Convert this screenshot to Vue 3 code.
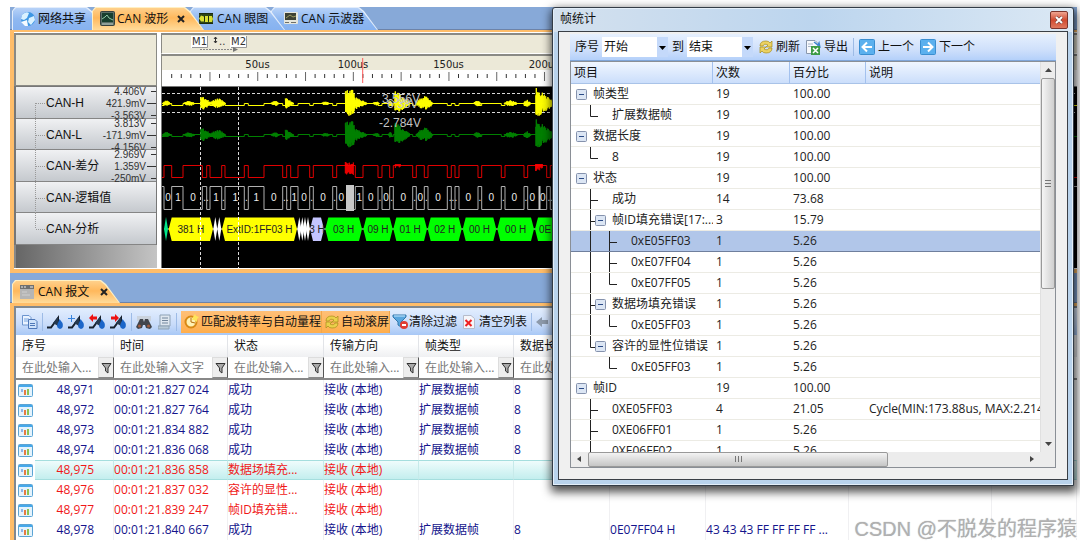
<script setup>
const channels = [
  { name: 'CAN-H', values: ['4.406V', '421.9mV', '-3.563V'] },
  { name: 'CAN-L', values: ['3.813V', '-171.9mV', '-4.156V'] },
  { name: 'CAN-差分', values: ['2.969V', '1.359V', '-250mV'] },
  { name: 'CAN-逻辑值', values: [] },
  { name: 'CAN-分析', values: [] },
]

/* Samples are stored at three units per pixel */
const px = (v) => Math.round((v / 3 - 4) * 10) / 10

const ticks = Array.from({ length: 96 }, (_, i) => ({ x: 9.7 + i * 9.56, major: i % 5 === 4 }))
const rulerLabels = Array.from({ length: 9 }, (_, i) => ({ x: 95.5 + i * 95.5, text: (i + 1) * 50 + 'us' }))

/* Bus edges: the level toggles at each one, starting recessive */
const edges = [
  18, 41, 75, 133, 146, 156, 191, 201, 259, 271, 318, 374, 386, 398, 420, 455, 466, 524, 536, 592,
  615, 660, 672, 695, 706, 764, 775, 799, 810, 868, 880, 891, 903, 960, 971, 1030, 1041, 1098, 1109,
  1166, 1177, 1235, 1247, 1304, 1316, 1400, 1412, 1500, 1540, 1620, 1632, 1700, 1712, 1800, 1812,
  1900, 1912, 2000, 2012, 2100, 2112, 2200, 2212, 2300, 2312, 2400, 2412, 2500, 2512, 2600, 2612, 2700,
]

function square(recessive, dominant) {
  let d = `M0 ${recessive}`
  edges.forEach((e, i) => {
    d += `H${px(e)}V${i % 2 === 0 ? dominant : recessive}`
  })
  return d + 'H920'
}

/* start, width, amplitude, shape */
const bursts = [
  [12, 26, 8, 'flat'], [76, 34, 8, 'flat'], [128, 30, 27, 'fade'], [156, 46, 14, 'flat'], [338, 26, 7, 'flat'],
  [382, 24, 17, 'fade'], [490, 24, 6, 'flat'], [562, 27, 42, 'full'], [587, 38, 22, 'fade'], [644, 20, 6, 'flat'],
  [690, 12, 8, 'flat'], [710, 44, 38, 'fade'], [774, 50, 20, 'flat'], [946, 24, 8, 'flat'], [1038, 40, 9, 'flat'],
  [1096, 22, 10, 'flat'], [1133, 54, 46, 'fade'],
]

function noise(i) {
  const s = Math.sin(i * 12.9898) * 43758.5453
  return s - Math.floor(s)
}

function burstPath(center) {
  let d = ''
  bursts.forEach(([x, w, a, shape], b) => {
    for (let i = 0; i <= w; i += 2) {
      const t = i / w
      const k = shape === 'full' ? 1 : shape === 'fade' ? 1.05 - t * 0.9 : Math.sin(Math.PI * t) + 0.1
      const up = (a / 3) * k * (0.5 + 0.5 * noise(b * 50 + i))
      const down = (a / 3) * k * (0.4 + 0.5 * noise(b * 91 + i + 7))
      d += `${i ? 'L' : 'M'}${px(x + i)} ${(center - up).toFixed(1)}L${px(x + i + 1)} ${(center + down).toFixed(1)}`
    }
  })
  return d
}

const canH = square(18.5, 16.5) + burstPath(16.5)
const canL = square(49.5, 47.5) + burstPath(48)
const diff = square(90.5, 78.5)
const logic = square(99.5, 122.5)

let diffNoise = ''
for (let i = 0; i < 26; i += 2) diffNoise += `M${px(562 + i)} ${75 + noise(i) * 3}V${88 - noise(i + 3) * 3}`
for (let i = 0; i < 22; i += 2) diffNoise += `M${px(1133 + i)} 77V${84 - noise(i) * 4}`
for (let i = 0; i < 16; i += 3) diffNoise += `M${px(712 + i)} 77V${81 - noise(i) * 3}`

const bits = [
  [30, '0'], [60, '1'], [105, '0'], [144, '..'], [174, '1'], [196, '.'], [232, '1'], [265, '.'], [295, '1'],
  [347, '0'], [383, '..'], [409, '1'], [438, '0'], [461, '.'], [495, '0'], [530, '.'], [550, '0'], [604, '1'],
  [638, '0'], [666, '.'], [684, '0'], [701, '.'], [736, '0'], [770, '.'], [787, '0'], [805, '.'], [840, '0'],
  [885, '...'], [931, '0'], [966, '.'], [1000, '0'], [1036, '.'], [1069, '0'], [1104, '.'], [1123, '0'], [1154, '0'], [1177, '..'],
]

const fields = [
  { a: 32, b: 165, text: '381 H', color: '#ffff00' },
  { a: 192, b: 417, text: 'ExtID:1FF03 H', color: '#ffff00' },
  { a: 456, b: 498, text: '3 H', color: '#c4c4ff' },
  { a: 502, b: 612, text: '03 H', color: '#00ff00' },
  { a: 616, b: 704, text: '09 H', color: '#00ff00' },
  { a: 706, b: 807, text: '01 H', color: '#00ff00' },
  { a: 809, b: 911, text: '02 H', color: '#00ff00' },
  { a: 914, b: 1015, text: '00 H', color: '#00ff00' },
  { a: 1018, b: 1128, text: '00 H', color: '#00ff00' },
  { a: 1131, b: 1222, text: '0E H', color: '#00ff00' },
].map((f) => {
  const a = px(f.a)
  const b = px(f.b)
  return { ...f, mid: (a + b) / 2, points: `${a},142 ${a + 3},130.5 ${b - 3},130.5 ${b},142 ${b - 3},154 ${a + 3},154` }
})
const spikes = [172, 184, 424, 433, 441, 450]

const headers = [
  { label: '时间', hint: '在此处输入文字' },
  { label: '状态', hint: '在此处输入...' },
  { label: '传输方向', hint: '在此处输入...' },
  { label: '帧类型', hint: '在此处输入...' },
  { label: '数据长度', hint: '在此处输入...' },
]
const ok = (no, time, id = '', data = '') => ({ no, time, state: '成功', type: '扩展数据帧', len: '8', id, data })
const bad = (no, time, state) => ({ no, time, state, error: true })
const messages = [
  ok('48,971', '00:01:21.827 024'),
  ok('48,972', '00:01:21.827 764'),
  ok('48,973', '00:01:21.834 882'),
  ok('48,974', '00:01:21.836 068'),
  { ...bad('48,975', '00:01:21.836 858', '数据场填充...'), selected: true },
  bad('48,976', '00:01:21.837 032', '容许的显性...'),
  bad('48,977', '00:01:21.839 247', '帧ID填充错...'),
  ok('48,978', '00:01:21.840 667', '0E07FF04 H', '43 43 43 FF FF FF FF ...'),
]

/* g: guide lines drawn left of the label */
const M0 = 'M19.5 0V21'
const stats = [
  { lv: 0, box: 1, t: '帧类型', n: 19, p: '100.00' },
  { lv: 1, t: '扩展数据帧', n: 19, p: '100.00', g: 'M19.5 0V11.5H27' },
  { lv: 0, box: 1, t: '数据长度', n: 19, p: '100.00' },
  { lv: 1, t: '8', n: 19, p: '100.00', g: 'M19.5 0V11.5H27' },
  { lv: 0, box: 1, t: '状态', n: 19, p: '100.00' },
  { lv: 1, t: '成功', n: 14, p: '73.68', g: M0 + 'M19.5 11.5H27' },
  { lv: 1, box: 1, t: '帧ID填充错误[17:...', n: 3, p: '15.79', g: M0 + 'M19.5 11.5H24' },
  { lv: 2, t: '0xE05FF03', n: 1, p: '5.26', g: M0 + 'M38.5 0V21M38.5 11.5H46', selected: true },
  { lv: 2, t: '0xE07FF04', n: 1, p: '5.26', g: M0 + 'M38.5 0V21M38.5 11.5H46' },
  { lv: 2, t: '0xE07FF05', n: 1, p: '5.26', g: M0 + 'M38.5 0V11.5H46' },
  { lv: 1, box: 1, t: '数据场填充错误', n: 1, p: '5.26', g: M0 + 'M19.5 11.5H24' },
  { lv: 2, t: '0xE05FF03', n: 1, p: '5.26', g: M0 + 'M38.5 0V11.5H46' },
  { lv: 1, box: 1, t: '容许的显性位错误', n: 1, p: '5.26', g: 'M19.5 0V11.5H24' },
  { lv: 2, t: '0xE05FF03', n: 1, p: '5.26', g: 'M38.5 0V11.5H46' },
  { lv: 0, box: 1, t: '帧ID', n: 19, p: '100.00' },
  { lv: 1, t: '0XE05FF03', n: 4, p: '21.05', g: M0 + 'M19.5 11.5H27', d: 'Cycle(MIN:173.88us, MAX:2.214ms)' },
  { lv: 1, t: '0XE06FF01', n: 1, p: '5.26', g: M0 + 'M19.5 11.5H27' },
  { lv: 1, t: '0XE06FF02', n: 1, p: '5.26', g: M0 + 'M19.5 11.5H27' },
]
</script>

<template>
  <div class="page">
    <main class="app">
      <nav class="tabs">
        <button class="tab t1">
          <svg width="16" height="16" viewBox="0 0 16 16">
            <circle cx="8" cy="8" r="7" fill="#3d97e4" />
            <path d="M2 4Q6 0 9 2L7 7 4 9 1 8ZM9 7l5-2 1 4-4 5-3-3Z" fill="#d9f1ff" />
            <path d="M1 11l6-2 1 6-3 0Z" fill="#f6fbff" />
          </svg>
          网络共享
        </button>
        <button class="tab t2 active">
          <svg width="15" height="15" viewBox="0 0 15 15">
            <rect x=".5" y=".5" width="14" height="14" rx="1" fill="#5b7068" stroke="#37413d" />
            <rect x="2" y="2" width="11" height="9" fill="#173f2e" />
            <path d="M2 8l3-2 2-2 2 3 4 2" fill="none" stroke="#8fc9a5" />
            <path d="M2 13h11" stroke="#c5d0c9" />
          </svg>
          CAN 波形
          <svg class="x" width="8" height="8" viewBox="0 0 8 8"><path d="M1 1l6 6M7 1L1 7" stroke="#222" stroke-width="2" /></svg>
        </button>
        <button class="tab t3">
          <svg width="14" height="11" viewBox="0 0 14 11">
            <rect width="14" height="11" fill="#1b2b12" />
            <path d="M0 2h14M0 9h14" stroke="#41601c" />
            <path d="M0 5.5l2-3 3 1v5l-3 0ZM6 3h3v6H6ZM10 3l3 0 1 3-1 3h-3Z" fill="#d8e034" />
          </svg>
          CAN 眼图
        </button>
        <button class="tab t4">
          <svg width="14" height="13" viewBox="0 0 14 13">
            <rect width="14" height="12" rx="1" fill="#e6e6dc" />
            <rect x="1" y="1" width="11" height="7" fill="#3e4234" />
            <path d="M2 6l4-3 3 2 3-1" stroke="#9d9c62" fill="none" />
            <path d="M1 10.500h4M7 10.500h5" stroke="#6f6f68" />
          </svg>
          CAN 示波器
        </button>
      </nav>

      <section class="scope">
        <div class="side">
          <div class="corner"></div>
          <div class="channels">
            <div v-for="(c, i) in channels" :key="c.name" class="channel">
              <svg class="branch" width="30" height="32" viewBox="0 0 30 32">
                <path :d="(i === 0 ? 'M19.500 16V32' : i === 4 ? 'M19.500 0V16' : 'M19.500 0V32') + 'M20 16.500H29'" fill="none" stroke="#999" stroke-dasharray="1 1" />
              </svg>
              <span class="cname">{{ c.name }}</span>
              <span class="vals"><span v-for="v in c.values" :key="v">{{ v }}</span></span>
              <svg class="marks" width="10" height="32" viewBox="0 0 10 32">
                <path v-if="c.values.length" d="M5 4.500H10M1 16.500H10M5 28.500H10" stroke="#333" />
              </svg>
            </div>
          </div>
          <div class="shade"></div>
        </div>
        <div class="plot">
          <div class="marker-bar">
            <svg width="916" height="19" viewBox="0 0 916 19">
              <rect x="29" y="1" width="16" height="12" fill="#fff" />
              <rect x="68" y="1" width="16" height="12" fill="#fff" />
              <path d="M30 12.500H45.500V1M69 12.500H84.500V1" fill="none" stroke="#999" />
              <text x="30" y="10" class="mk">M1</text>
              <text x="69" y="10" class="mk">M2</text>
              <path d="M53.500 2V8M52 4l1.500-2 1.500 2M52 6l1.500 2 1.500-2" fill="none" stroke="#333" />
              <text x="57" y="10" class="mk">..</text>
              <path d="M38 14.500H73" stroke="#888" stroke-dasharray="2 1" />
              <path d="M71 12l5 2.500-5 2.500Z" fill="#777" />
            </svg>
          </div>
          <div class="ruler">
            <svg width="916" height="30" viewBox="0 0 916 30">
              <rect y="14" width="916" height="16" fill="#fff" />
              <text v-for="l in rulerLabels" :key="l.text" :x="l.x" y="12" class="rl">{{ l.text }}</text>
              <path v-for="(t, i) in ticks" :key="i" :d="t.major ? `M${t.x} 16V25` : `M${t.x} 18V22`" :stroke="t.major ? '#666' : '#333'" />
              <path d="M200.700 2V27" stroke="#ff5a5a" />
            </svg>
          </div>
          <div class="wave">
            <svg width="916" height="181" viewBox="0 0 916 181">
              <g stroke="#d8d8d8" stroke-dasharray="3 2">
                <path d="M0 6.500H916M0 25.500H916M38.500 0V181M76.500 0V181" />
              </g>
              <path :d="canH" fill="none" stroke="#ffff00" />
              <path :d="canL" fill="none" stroke="#008000" />
              <path :d="diff" fill="none" stroke="#e00000" />
              <path :d="diffNoise" stroke="#ff0000" />
              <path :d="logic" fill="none" stroke="#b0b0b0" />
              <rect x="184" y="98" width="8" height="26" fill="#c8c8c8" />
              <path d="M377.500 99V123" stroke="#c8c8c8" stroke-width="2" />
              <text v-for="b in bits" :key="b[0]" :x="px(b[0])" y="114" class="bit">{{ b[1] }}</text>
              <path d="M2 142H430" stroke="#ddd" />
              <path d="M4 130l2 12-2 12-2-12Z" fill="#00e58a" />
              <path v-for="s in spikes" :key="s" :d="`M${px(s)} 130l2 12-2 12-2-12Z`" fill="#fff" />
              <g v-for="f in fields" :key="f.a">
                <polygon :points="f.points" :fill="f.color" />
                <text :x="f.mid" y="146" class="field">{{ f.text }}</text>
              </g>
              <path d="M38.500 130V155M76.500 130V155" stroke="#fff" stroke-dasharray="3 2" />
              <g class="readout">
                <text x="220" y="16">3.556V</text>
                <text x="225" y="21">6.38V</text>
                <text x="217" y="40">-2.784V</text>
              </g>
            </svg>
          </div>
        </div>
      </section>

      <nav class="tabs low">
        <button class="tab t5 active">
          <svg width="14" height="14" viewBox="0 0 14 14">
            <rect width="14" height="14" fill="#b5b5b5" />
            <rect width="14" height="4" fill="#707070" />
            <path d="M1 2h2M4 2h2M10 2h3" stroke="#eee" />
            <path d="M2 7h5M2 10h8" stroke="#cfcfcf" />
          </svg>
          CAN 报文
          <svg class="x" width="8" height="8" viewBox="0 0 8 8"><path d="M1 1l6 6M7 1L1 7" stroke="#222" stroke-width="2" /></svg>
        </button>
      </nav>

      <section class="messages">
        <div class="toolbar">
          <button aria-label="复制">
            <svg width="16" height="14" viewBox="0 0 16 14">
              <path d="M.5.500H7l2 2V10H.500Z" fill="#eaf3ff" stroke="#6c95cf" /><path d="M2 4h5M2 6h5" stroke="#79a4de" />
              <path d="M6.500 4.500H13l2 2v7H6.500Z" fill="#cfe2fa" stroke="#4f78b8" /><path d="M8 8.500h5M8 10.500h5" stroke="#4f78b8" />
            </svg>
          </button>
          <i class="sep"></i>
          <button v-for="k in 4" :key="k" class="mark" :aria-label="'标记 ' + k">
            <svg width="17" height="16" viewBox="0 0 17 16">
              <path d="M0 13.500h4L11 4v8" fill="none" stroke="#17202c" stroke-width="2" />
              <path d="M6 9l5-6v9Z" fill="#26394f" />
              <path d="M12.500 5l3 4q1.500 5-2.500 6-4-1-2.500-5Z" fill="#1c66c9" />
              <path v-if="k === 2" d="M0 4.500h7M3.500 1v7" stroke="#3884dd" />
              <path v-if="k === 3" d="M0 4l4-4v2.500h4v3H4v2.500Z" fill="#ee1111" />
              <path v-if="k === 4" d="M9 4L5 0v2.500H1v3h4v2.500Z" fill="#ee1111" />
            </svg>
          </button>
          <i class="sep"></i>
          <button aria-label="查找">
            <svg width="16" height="14" viewBox="0 0 16 14">
              <path d="M1 1h14v5H1Z" fill="#cbd3dd" />
              <path d="M4 4h3l1 3 1-3h3l4 8-2 2-4-1-1-3H7l-1 3-4 1-2-2Z" fill="#42454c" />
              <circle cx="3.500" cy="11" r="1.500" fill="#a45c3e" /><circle cx="12.500" cy="11" r="1.500" fill="#a45c3e" />
            </svg>
          </button>
          <button class="doc" aria-label="详情">
            <svg width="14" height="16" viewBox="0 0 14 16">
              <path d="M2 1h10v11H2Z" fill="#dfe7ef" stroke="#8ea2b5" /><path d="M4 4h6M4 6.500h6M4 9h6" stroke="#71859b" />
              <path d="M0 12h11v3H0Z" fill="#b6c8d6" stroke="#8ea2b5" />
            </svg>
          </button>
          <i class="sep"></i>
          <button class="hot">
            <svg width="15" height="15" viewBox="0 0 15 15">
              <circle cx="7" cy="8" r="5.500" fill="#fff2b4" stroke="#d88915" stroke-width="2" />
              <path d="M7 4v4l4 1" fill="none" stroke="#b56a0a" /><path d="M11 0l1 2 3 1-2 2 0 3-3-2-2 0 1-3Z" fill="#ffe65a" />
            </svg>
            匹配波特率与自动量程
          </button>
          <button class="hot">
            <svg width="14" height="14" viewBox="0 0 14 14">
              <path d="M1 6Q1 1 7 1q3 0 4 2l2-2v6H7l2-2Q5 3 4 6Z" fill="#ead14a" stroke="#a88c1b" stroke-width=".7" />
              <path d="M13 8q0 5-6 5-3 0-4-2l-2 2V7h6L5 9q4 2 5-1Z" fill="#ead14a" stroke="#a88c1b" stroke-width=".7" />
            </svg>
            自动滚屏
          </button>
          <button class="plain">
            <svg width="16" height="15" viewBox="0 0 16 15">
              <path d="M1 1h13v2L9 8v5l-3-2V8L1 3Z" fill="#59a6de" stroke="#3478ac" /><path d="M2 2h11" stroke="#c7e8ff" />
              <circle cx="12" cy="11" r="4" fill="#e03d34" /><path d="M10 11h4" stroke="#fff" stroke-width="2" />
            </svg>
            清除过滤
          </button>
          <button class="plain gap">
            <svg width="12" height="14" viewBox="0 0 12 14">
              <path d="M.5.500H8l3.500 3V13.500H.500Z" fill="#f6f6fa" stroke="#b6bccb" /><path d="M2.500 5l6 6M8.500 5l-6 6" stroke="#ef2020" stroke-width="2" />
            </svg>
            清空列表
          </button>
          <i class="sep"></i>
          <button aria-label="声音">
            <svg width="16" height="12" viewBox="0 0 16 12"><path d="M0 6l6-5v3h6v4H6v3Z" fill="#8d9aab" /></svg>
          </button>
        </div>

        <table class="grid">
          <colgroup>
            <col class="c-ic"><col class="c-no"><col class="c-time"><col class="c-96"><col class="c-95"><col class="c-95">
            <col class="c-96"><col class="c-96"><col class="c-143"><col class="c-143"><col>
          </colgroup>
          <thead>
            <tr>
              <th colspan="2">序号</th>
              <th v-for="h in headers" :key="h.label">{{ h.label }}</th>
              <th></th><th></th><th></th><th></th>
            </tr>
            <tr class="filter">
              <td colspan="2">
                <div><input aria-label="序号" placeholder="在此处输入..."><button aria-label="筛选序号"><svg width="11" height="12" viewBox="0 0 11 12"><path d="M1 1.500H10L7 6v5L4.500 9V6Z" fill="#aaa" stroke="#333" /></svg></button></div>
              </td>
              <td v-for="h in headers" :key="h.label">
                <div><input :aria-label="h.label" :placeholder="h.hint"><button :aria-label="'筛选' + h.label"><svg width="11" height="12" viewBox="0 0 11 12"><path d="M1 1.500H10L7 6v5L4.500 9V6Z" fill="#aaa" stroke="#333" /></svg></button></div>
              </td>
              <td></td><td></td><td></td><td></td>
            </tr>
          </thead>
          <tbody>
            <tr v-for="m in messages" :key="m.no" :class="{ err: m.error, sel: m.selected }">
              <td class="ic">
                <svg width="15" height="13" viewBox="0 0 15 13">
                  <rect x=".5" y=".5" width="14" height="12" rx="1" fill="#e4f3fd" stroke="#5ba4d4" /><path d="M1 2h13" stroke="#46a8ea" stroke-width="2" />
                  <path d="M4 5v3" stroke="#8fb4ea" stroke-width="2" /><path d="M7 6v5" stroke="#e57b42" stroke-width="2" /><path d="M10 5v6" stroke="#8fc352" stroke-width="2" />
                </svg>
              </td>
              <td class="no">{{ m.no }}</td>
              <td>{{ m.time }}</td>
              <td>{{ m.state }}</td>
              <td>接收 (本地)</td>
              <td>{{ m.type }}</td>
              <td>{{ m.len }}</td>
              <td>{{ m.id }}</td>
              <td>{{ m.data }}</td>
              <td></td><td></td>
            </tr>
          </tbody>
        </table>
      </section>
    </main>

    <aside class="dialog" role="dialog" aria-labelledby="dlg-title">
      <header>
        <span id="dlg-title">帧统计</span>
        <button class="close" aria-label="关闭"><svg width="8" height="8" viewBox="0 0 8 8"><path d="M1 1l6 6M7 1L1 7" stroke="#5a3a3a" stroke-width="3" /><path d="M1 1l6 6M7 1L1 7" stroke="#fff" stroke-width="2" /></svg></button>
      </header>
      <div class="body">
        <div class="bar">
          <label for="from">序号</label>
          <span class="combo"><select id="from"><option>开始</option></select><svg width="11" height="20" viewBox="0 0 11 20"><path d="M2 9h7l-3.500 4Z" fill="#000" /></svg></span>
          <label for="to">到</label>
          <span class="combo"><select id="to"><option>结束</option></select><svg width="11" height="20" viewBox="0 0 11 20"><path d="M2 9h7l-3.500 4Z" fill="#000" /></svg></span>
          <button>
            <svg width="14" height="14" viewBox="0 0 14 14">
              <path d="M1 6Q1 1 7 1q3 0 4 2l2-2v6H7l2-2Q5 3 4 6Z" fill="#ecd262" stroke="#a88c1b" stroke-width=".7" />
              <path d="M13 8q0 5-6 5-3 0-4-2l-2 2V7h6L5 9q4 2 5-1Z" fill="#ecd262" stroke="#a88c1b" stroke-width=".7" />
            </svg>
            刷新
          </button>
          <button>
            <svg width="15" height="15" viewBox="0 0 15 15">
              <path d="M.5.500H9l3 3V13.500H.500Z" fill="#f7f9fc" stroke="#8a98ad" /><path d="M2 4h5M2 6.500h3" stroke="#a8b5c8" />
              <path d="M8 2l4 3 1-2 1 5" fill="none" stroke="#3c84cf" stroke-width="1.500" />
              <rect x="5" y="6" width="9" height="9" fill="#3d9b45" /><path d="M7 8l5 5M12 8l-5 5" stroke="#fff" stroke-width="1.500" />
            </svg>
            导出
          </button>
          <i class="sep"></i>
          <button>
            <svg width="16" height="16" viewBox="0 0 16 16"><rect x=".5" y=".5" width="15" height="15" rx="1" fill="#5bb0ee" stroke="#3a8ed0" /><path d="M13 8H4M8 3.500L3.500 8 8 12.500" fill="none" stroke="#fff" stroke-width="2" /></svg>
            上一个
          </button>
          <button>
            <svg width="16" height="16" viewBox="0 0 16 16"><rect x=".5" y=".5" width="15" height="15" rx="1" fill="#5bb0ee" stroke="#3a8ed0" /><path d="M3 8h9M8 3.500L12.500 8 8 12.500" fill="none" stroke="#fff" stroke-width="2" /></svg>
            下一个
          </button>
        </div>
        <div class="list">
          <div class="top">
            <div class="view">
              <table class="tree">
                <colgroup><col class="k1"><col class="k2"><col class="k3"><col></colgroup>
                <thead><tr><th>项目</th><th>次数</th><th>百分比</th><th>说明</th></tr></thead>
                <tbody>
                  <tr v-for="(r, i) in stats" :key="i" :class="{ sel: r.selected }">
                    <td class="item"><div>
                      <svg :width="22 + r.lv * 19" height="21" :viewBox="`0 0 ${22 + r.lv * 19} 21`">
                        <path v-if="r.g" :d="r.g" fill="none" stroke="#222" />
                        <g v-if="r.box">
                          <rect :x="5.5 + r.lv * 19" y="5.500" width="10" height="10" rx="1" fill="#dce6f4" stroke="#8592ad" />
                          <path :d="`M${8 + r.lv * 19} 10.500h5`" stroke="#2a4a86" />
                        </g>
                      </svg><span>{{ r.t }}</span>
                    </div></td>
                    <td>{{ r.n }}</td>
                    <td>{{ r.p }}</td>
                    <td>{{ r.d }}</td>
                  </tr>
                </tbody>
              </table>
            </div>
            <div class="vbar">
              <svg width="15" height="16" viewBox="0 0 15 16"><path d="M4 10h7L7.500 6Z" fill="#444" /></svg>
              <div class="thumb"><svg width="7" height="8" viewBox="0 0 7 8"><path d="M0 1.500h6M0 4.500h6M0 7.500h6" stroke="#777" /></svg></div>
              <svg width="15" height="16" viewBox="0 0 15 16"><path d="M4 6h7L7.500 10Z" fill="#444" /></svg>
            </div>
          </div>
          <div class="hbar">
            <svg width="17" height="14" viewBox="0 0 17 14"><path d="M10 4v6L6 7Z" fill="#444" /></svg>
            <div class="thumb"><svg width="9" height="7" viewBox="0 0 9 7"><path d="M1.500 0v6M4.500 0v6M7.500 0v6" stroke="#777" /></svg></div>
            <svg class="r" width="17" height="14" viewBox="0 0 17 14"><path d="M7 4v6l4-3Z" fill="#444" /></svg>
          </div>
        </div>
      </div>
    </aside>

    <div class="watermark">CSDN @不脱发的程序猿</div>
  </div>
</template>

<style>
body { margin: 0; background: #fff; }
</style>

<style scoped>
.page {
  position: relative;
  box-sizing: border-box;
  min-height: 100vh;
  padding: 7px 3px 6px 10px;
  overflow: hidden;
  background: #fff;
  color: #111;
  font: 12px/16px "Open Sans", "Noto Sans CJK SC", sans-serif;
}
.page * { box-sizing: border-box; }
svg { display: block; flex: none; }
button, input, select { font: inherit; color: inherit; margin: 0; padding: 0; border: 0; background: none; border-radius: 0; }
.app { background: #87a9d8; overflow: hidden; }

.tabs { display: flex; height: 23px; padding-left: 2px; border-bottom: 1px solid #6d83a8; }
.tab {
  position: relative;
  display: flex;
  align-items: center;
  gap: 4px;
  height: 23px;
  margin-right: -14px;
  padding-left: 8px;
  background: #e3edfb;
  white-space: nowrap;
  isolation: isolate;
  clip-path: polygon(0 100%, 0 4px, 3px 0, calc(100% - 19px) 0, calc(100% - 14px) 4px, 100% 100%);
}
.tab::before {
  content: "";
  position: absolute;
  inset: 1px 1px 0 1px;
  z-index: -1;
  background: linear-gradient(#b7d2f8, #8fb8f1 50%, #86b2f0);
  clip-path: polygon(0 100%, 0 3px, 3px 0, calc(100% - 19px) 0, calc(100% - 14px) 4px, 100% 100%);
}
.tab.active { z-index: 3; background: #fff0c4; }
.tab.active::before { background: linear-gradient(#ffd08b, #ffb85c 45%, #ffdb9a); }
.tab .x { margin-left: 7px; }
.t1 { width: 94px; gap: 2px; }
.t2 { width: 112px; gap: 2px; }
.t3 { z-index: 2; width: 95px; padding-left: 9px; }
.t4 { z-index: 1; width: 107px; padding-left: 13px; gap: 3px; }
.t5 { width: 108px; }
.low { height: 30px; padding-top: 7px; }

.scope {
  display: flex;
  gap: 4px;
  padding: 1px 0;
  background: #fff;
  border: solid #ffbd69;
  border-width: 2px 0 4px 4px;
}
.side { flex: none; width: 143px; background: #ece9d8; }
.corner { height: 53px; background: #ece9d8; border: solid #8a8a85; border-width: 2px 1px 1px 2px; }
.channels { display: flex; flex-direction: column; height: 159px; border: solid #777; border-width: 1px 1px 0 2px; }
.channel {
  display: flex;
  flex: 1;
  min-height: 0;
  background: linear-gradient(#f0f1f3, #c5c9ce);
  border-bottom: 1px solid #858585;
  font-family: "Liberation Sans", "Noto Sans CJK SC", sans-serif;
}
.cname { flex: 1; line-height: 32px; white-space: nowrap; }
.vals { display: flex; flex-direction: column; margin-top: -1px; font-size: 10px; line-height: 12px; text-align: right; color: #333; }
.shade { height: 23px; background: linear-gradient(90deg, #666, #c4c4c4); border-left: 2px solid #888; }
.plot { flex: 1; min-width: 0; }
.marker-bar, .ruler { overflow: hidden; background: #ece9d8; border: solid #8a8a85; border-width: 2px 0 0 1px; }
.marker-bar { height: 21px; border-bottom: 1px solid #fff; }
.ruler { height: 32px; }
.wave { height: 182px; overflow: hidden; background: #000; border: solid #777; border-width: 1px 0 0 1px; }
.mk { font: 10px "DejaVu Sans", sans-serif; fill: #333; }
.rl { font: 10px "DejaVu Sans", sans-serif; text-anchor: middle; fill: #222; }
.bit { font: 10px "Liberation Sans", sans-serif; text-anchor: middle; fill: #eee; }
.field { font: 10px "Liberation Sans", sans-serif; text-anchor: middle; fill: #222; }
.readout { font: 12px "Liberation Sans", sans-serif; fill: #c4c4c4; }

.messages { border: solid #ffbd69; border-width: 3px 0 0 4px; }
.toolbar {
  display: flex;
  align-items: center;
  height: 29px;
  padding-left: 6px;
  border: solid #808890;
  border-width: 2px 0 0 2px;
  background: linear-gradient(#e3eefe, #c9dcfa 60%, #a8c8f6);
  white-space: nowrap;
  overflow: hidden;
}
.toolbar button { display: flex; align-items: center; flex: none; }
.sep { flex: none; width: 1px; height: 18px; margin: 0 4px; background: #9dbbe6; }
.mark { margin-right: 4px; }
.mark + .sep { margin-left: 0; }
.doc { margin-left: 6px; }
.toolbar .hot { height: 22px; gap: 2px; padding-left: 3px; background: linear-gradient(#ffc078, #ffae4c); border-right: 1px solid #f2a74c; }
.toolbar .plain { gap: 1px; margin-left: 2px; }
.toolbar .plain.gap { gap: 4px; margin-left: 6px; }

.grid { width: 100%; table-layout: fixed; border-collapse: separate; border-spacing: 0; border-left: 2px solid #808890; background: #fff; }
.c-ic { width: 19px; }
.c-no { width: 79px; }
.c-time { width: 114px; }
.c-95 { width: 95px; }
.c-96 { width: 96px; }
.c-143 { width: 143px; }
.grid th { height: 22px; padding: 0 0 0 6px; text-align: left; font-weight: 400; background: linear-gradient(#fff 40%, #eff0f2); border-right: 1px solid #e2e4e8; white-space: nowrap; }
.filter td { height: 23px; padding: 0; border-bottom: 2px solid #888; }
.filter div { display: flex; align-items: center; padding-left: 6px; }
.filter input { flex: 1; width: 10px; height: 21px; outline: 0; }
.filter input::placeholder { color: #777; opacity: 1; }
.filter button { flex: none; display: grid; place-items: center; width: 16px; height: 21px; background: #eee; border: 1px solid #ddd; border-right-color: #555; border-bottom-color: #888; }
.grid tbody td { height: 20px; padding: 0; border-right: 1px solid #f0f0f2; color: #14148c; white-space: nowrap; overflow: hidden; line-height: 18px; }
.grid tbody .ic { padding-left: 2px; border-right: 0; }
.grid tbody .no { padding-right: 19px; text-align: right; }
.grid tbody .err td { color: #f01818; }
.grid tbody .sel td:not(.ic) { background: linear-gradient(#effcfc, #c3eeee); border-top: 1px solid #a5dede; border-bottom: 1px solid #a5dede; border-right-color: #c7eaea; }

.dialog {
  position: absolute;
  top: 7px;
  right: 6px;
  bottom: 60px;
  left: 552px;
  z-index: 5;
  display: flex;
  flex-direction: column;
  padding: 0 5px 5px;
  border: 1px solid #333c46;
  border-radius: 3px 3px 0 0;
  background: linear-gradient(90deg, #d4e1ee, #bcd5ee 50%, #dbe8f4) top / 100% 24px no-repeat, #b9d3ec;
  box-shadow: 1px 4px 10px 2px rgba(0, 0, 0, .7), inset 0 0 0 1px #e3eef8;
}
.dialog header { display: flex; justify-content: space-between; align-items: flex-start; height: 23px; padding: 3px 0 0 2px; }
.close { display: grid; place-items: center; width: 18px; height: 18px; border: 1px solid #7c342c; border-radius: 2px; background: linear-gradient(#efa592, #d04a30 50%, #e0785e); }
.body { flex: 1; min-height: 0; display: flex; flex-direction: column; padding: 2px 11px 11px; background: #f0f0f0; border: 1px solid #3a3f46; }
.bar { display: flex; flex: none; align-items: center; height: 27px; padding-left: 5px; background: linear-gradient(#e6f0fe, #cfe0fb 60%, #b4d0fa); border-bottom: 1px solid #7fa5d8; white-space: nowrap; }
.bar label { margin-right: 3px; }
.combo { display: flex; height: 20px; width: 66px; margin-right: 4px; background: #c4d9fa; }
.combo select { flex: 1; width: 54px; padding-left: 2px; appearance: none; background: #fff; outline: 0; }
.bar button { display: flex; align-items: center; gap: 3px; margin-left: 2px; margin-right: 4px; }
.bar .sep { margin: 0 3px 0 1px; }
.list { flex: 1; min-height: 0; display: flex; flex-direction: column; border: 1px solid #8a8f96; background: #fff; }
.top { flex: 1; min-height: 0; display: flex; }
.view { flex: 1; min-width: 0; overflow: hidden; }
.tree { width: 100%; table-layout: fixed; border-collapse: separate; border-spacing: 0; }
.k1 { width: 142px; }
.k2 { width: 77px; }
.k3 { width: 76px; }
.tree th { height: 22px; padding: 0 0 0 3px; text-align: left; font-weight: 400; background: linear-gradient(#f0f6ff, #cbdefb); border-right: 1px solid #a3c1ee; border-bottom: 1px solid #a9c3e8; }
.tree th:last-child { border-right: 0; }
.tree td { height: 21px; padding: 0 0 0 3px; border-bottom: 1px solid #ecebe4; line-height: 18px; white-space: nowrap; overflow: hidden; color: #222; }
.tree .item { padding: 0; }
.item div { display: flex; height: 20px; }
.item svg { margin-bottom: -1px; }
.item span { line-height: 20px; }
.tree .sel td { background: #b1c6e9; border-bottom-color: #6f7f9d; }
.vbar { flex: none; display: flex; flex-direction: column; width: 15px; background: #ececec; border-left: 1px solid #e0e0e0; }
.vbar .thumb { flex: none; width: 14px; height: 54%; margin-bottom: auto; display: grid; place-items: center; background: linear-gradient(90deg, #f5f5f5, #cfcfcf); border: 1px solid #999; border-radius: 2px; }
.hbar { flex: none; display: flex; height: 15px; background: #ececec; }
.hbar .thumb { width: 62%; display: grid; place-items: center; background: linear-gradient(#f3f3f3, #c6c6c6); border: 1px solid #999; border-radius: 2px; }
.hbar .r { margin-left: auto; margin-right: 15px; }
.watermark {
  position: absolute;
  right: 3px;
  bottom: 4px;
  font: 20px/26px "Liberation Sans", "Noto Sans CJK SC", sans-serif;
  color: #b0b0b0;
  text-shadow: 1px 1px 1px #fff, 0 0 1px #999;
  white-space: nowrap;
}
</style>
